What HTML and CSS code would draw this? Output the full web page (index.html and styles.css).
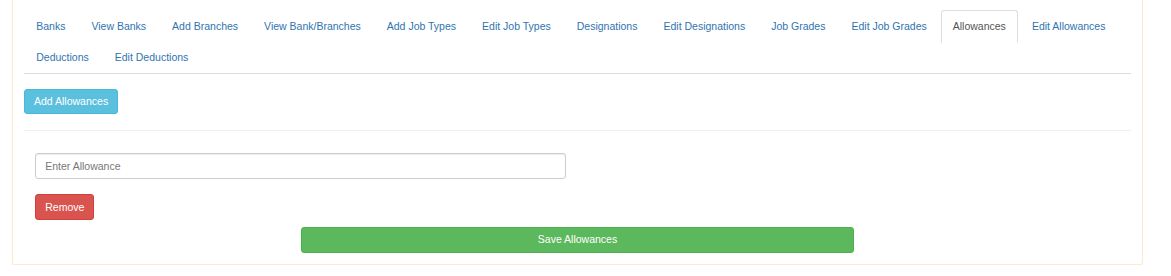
FILE: index.html
```html
<!DOCTYPE html>
<html lang="en">
<head>
<meta charset="utf-8">
<title>Allowances</title>
<link rel="stylesheet" href="styles.css">
</head>
<body>
<div class="panel">
  <div class="panel-body">
    <ul class="nav-tabs">
      <li><a href="#">Banks</a></li>
      <li><a href="#">View Banks</a></li>
      <li><a href="#">Add Branches</a></li>
      <li><a href="#">View Bank/Branches</a></li>
      <li><a href="#">Add Job Types</a></li>
      <li><a href="#">Edit Job Types</a></li>
      <li><a href="#">Designations</a></li>
      <li><a href="#">Edit Designations</a></li>
      <li><a href="#">Job Grades</a></li>
      <li><a href="#">Edit Job Grades</a></li>
      <li class="active"><a href="#">Allowances</a></li>
      <li><a href="#">Edit Allowances</a></li>
      <li><a href="#">Deductions</a></li>
      <li><a href="#">Edit Deductions</a></li>
    </ul>
    <div class="tab-content">
      <button class="btn btn-info add-btn" type="button">Add Allowances</button>
      <hr class="divider">
      <div class="row">
        <div class="col-half">
          <input class="form-control" type="text" placeholder="Enter Allowance">
          <button class="btn btn-danger remove-btn" type="button">Remove</button>
        </div>
      </div>
      <button class="btn btn-success save-btn" type="button">Save Allowances</button>
    </div>
  </div>
</div>
</body>
</html>
```

FILE: styles.css
```css
* { box-sizing: border-box; }

html, body {
  margin: 0;
  padding: 0;
  background: #fff;
}

body {
  font-family: "Liberation Sans", Arial, Helvetica, sans-serif;
  font-size: 10.5px;
  line-height: 15px;
  color: #333;
}

.panel {
  margin-left: 12px;
  width: 1131px;
  border: 1px solid #faebcc;
  border-top: none;
  border-radius: 0 0 3px 3px;
  background: #fff;
  box-shadow: 0 1px 1px rgba(0, 0, 0, 0.05);
}

.panel-body {
  padding: 10px 11px 11px 11px;
}

.nav-tabs {
  list-style: none;
  margin: 0;
  padding: 0;
  display: flex;
  flex-wrap: wrap;
  border-bottom: 1px solid #ddd;
}

.nav-tabs li {
  margin-bottom: -1px;
}

.nav-tabs a {
  display: block;
  padding: 7.5px 11.25px 8px 11.25px;
  margin-right: 1.5px;
  line-height: 15px;
  border: 1px solid transparent;
  border-radius: 3px 3px 0 0;
  color: #2f74b0;
  text-decoration: none;
}

.nav-tabs li.active a {
  color: #555;
  background: #fff;
  border-color: #ddd #ddd transparent #ddd;
}

.tab-content {
  display: flex;
  flex-direction: column;
  align-items: flex-start;
}

.btn {
  display: inline-block;
  font-family: inherit;
  font-size: 10.5px;
  line-height: 15px;
  padding: 4px 9px;
  border: 1px solid transparent;
  border-radius: 3px;
  color: #fff;
  cursor: pointer;
  text-align: center;
  white-space: nowrap;
}

.btn-info {
  background: #5bc0de;
  border-color: #46b8da;
}

.btn-danger {
  background: #d9534f;
  border-color: #d43f3a;
}

.btn-success {
  background: #5cb85c;
  border-color: #4cae4c;
}

.add-btn {
  margin-top: 15px;
  height: 25px;
}

.divider {
  align-self: stretch;
  margin: 16px 0 0 0;
  border: 0;
  border-top: 1px solid #eee;
  height: 0;
}

.row {
  align-self: stretch;
  margin-top: 22px;
}

.col-half {
  width: 50%;
  padding: 0 11.25px;
  display: flex;
  flex-direction: column;
  align-items: flex-start;
}

.form-control {
  display: block;
  width: 100%;
  height: 26px;
  padding: 4.5px 9px;
  font-family: inherit;
  font-size: 10.5px;
  line-height: 15px;
  color: #555;
  background: #fff;
  border: 1px solid #ccc;
  border-radius: 3px;
  box-shadow: inset 0 1px 1px rgba(0, 0, 0, 0.075);
  outline: none;
}

.form-control::placeholder {
  color: #777;
}

.remove-btn {
  margin-top: 15px;
  height: 26px;
}

.save-btn {
  margin-top: 7px;
  margin-left: 25%;
  width: 50%;
  height: 25.5px;
}
```
